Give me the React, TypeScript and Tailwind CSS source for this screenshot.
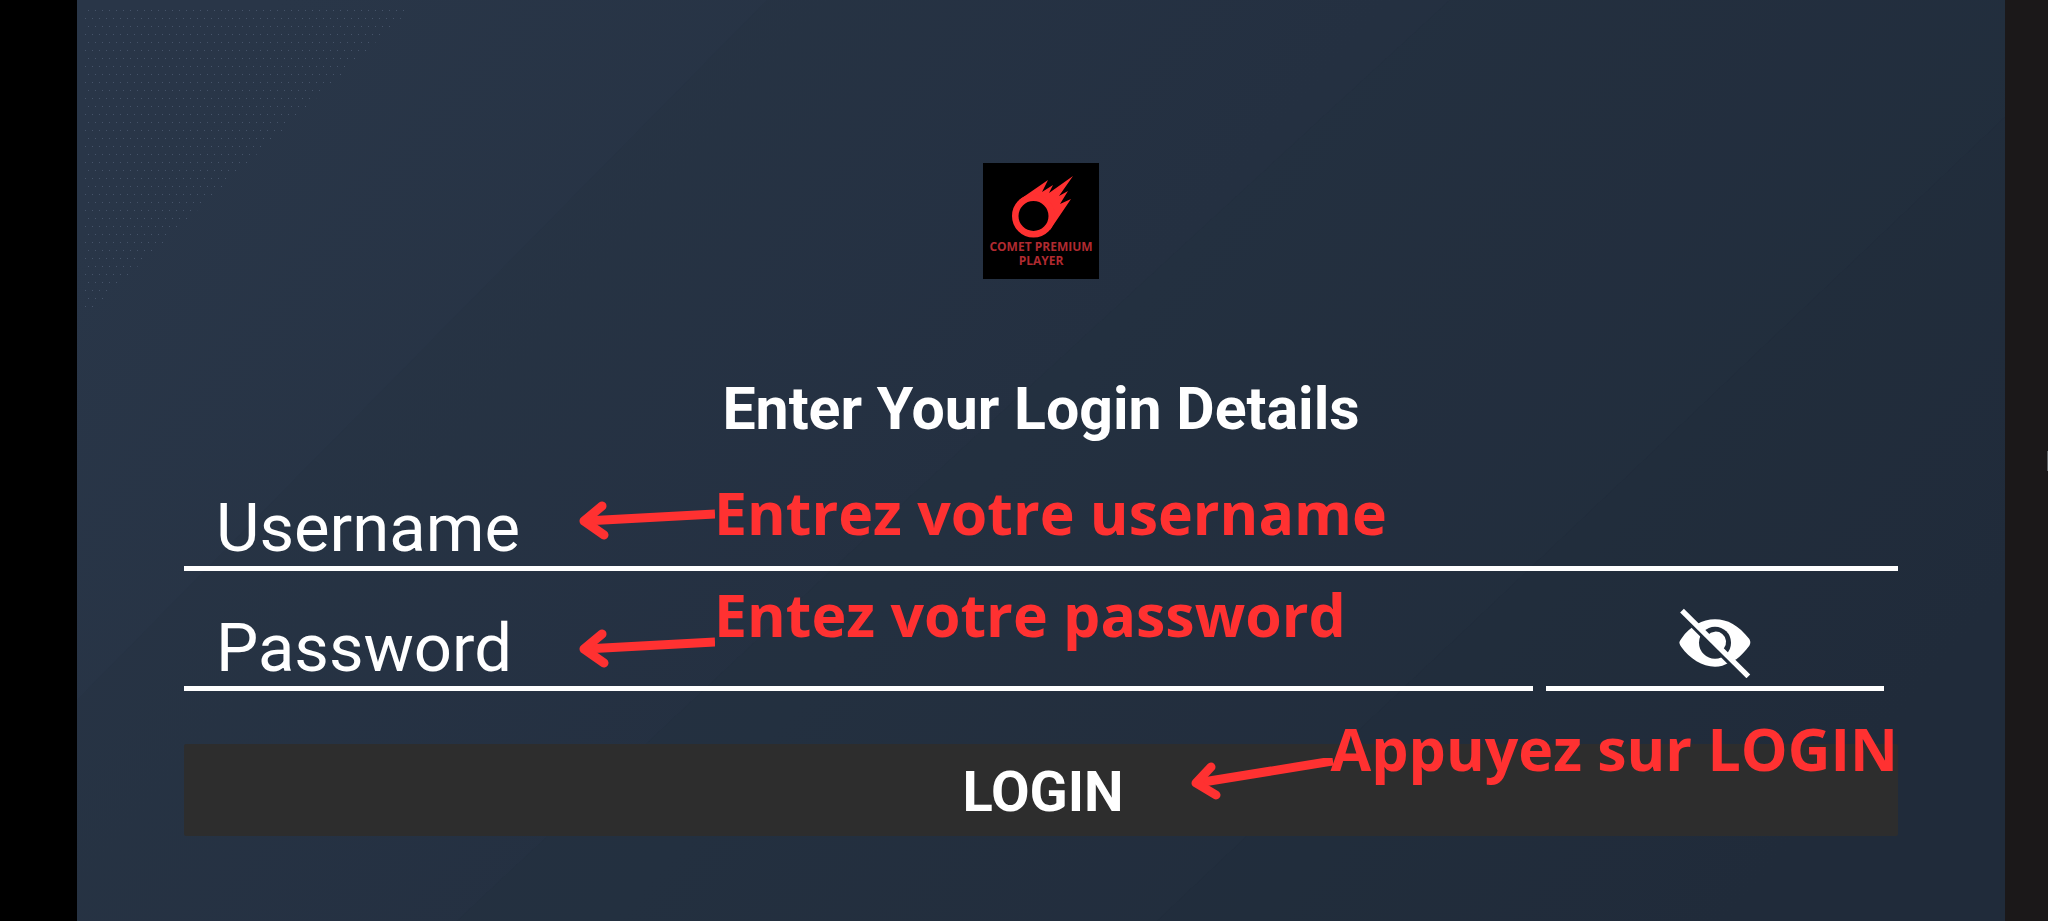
import { useState } from 'react'

function Backdrop() {
  return (
    <svg aria-hidden="true" className="absolute inset-0 h-full w-full" viewBox="0 0 1928 921" preserveAspectRatio="xMinYMin slice">
      <defs>
        <linearGradient id="base" gradientUnits="userSpaceOnUse" x1="200" y1="0" x2="1500" y2="1100">
          <stop offset="0" stopColor="#293648" />
          <stop offset="0.5" stopColor="#253142" />
          <stop offset="1" stopColor="#212c3b" />
        </linearGradient>
        <pattern id="dots" width="14" height="16" patternUnits="userSpaceOnUse">
          <path d="M1 2h1v1h-1zM8 2h1v1h-1zM4 10h1v1h-1zM11 10h1v1h-1z" fill="#46546a" />
        </pattern>
      </defs>
      <rect width="1928" height="921" fill="url(#base)" />
      <path d="M690 0H1373L837 493L380 921H0V700Z" fill="#243041" fillOpacity="0.25" />
      <path d="M1373 0H1928V117L1464 558L1080 921H380L837 493Z" fill="#222d3d" fillOpacity="0.3" />
      <path d="M1928 117V921H1080L1464 558Z" fill="#1f2a38" fillOpacity="0.35" />
      <path d="M6 8H335L6 318Z" fill="url(#dots)" />
    </svg>
  )
}

function Logo() {
  return (
    <svg role="img" aria-label="Comet Premium Player" className="size-29" viewBox="0 0 116 116">
      <rect width="116" height="116" fill="#000" />
      <path d="M90 13L76 33L85 28L77 41L88 36L67 67L50 53L36 37L65 17L59 29L70 22L66 30Z" fill="#ff3131" />
      <circle cx="50.500" cy="53" r="18.250" fill="#000" stroke="#ff3131" strokeWidth="6.500" />
      <text x="58" y="88" textAnchor="middle" className="fill-[#b02a30] font-['Open_Sans',sans-serif] text-[12px] font-bold">COMET PREMIUM</text>
      <text x="58" y="102" textAnchor="middle" className="fill-[#b02a30] font-['Open_Sans',sans-serif] text-[12px] font-bold">PLAYER</text>
    </svg>
  )
}

function EyeOff() {
  return (
    <svg aria-hidden="true" className="h-[70px] w-[72px]" viewBox="0 0 216 210">
      <mask id="eye-cut" maskUnits="userSpaceOnUse" x="0" y="0" width="216" height="210">
        <rect width="216" height="210" fill="#fff" />
        <circle cx="108" cy="104" r="48" fill="#000" />
        <path d="M86 82A28 28 0 0 1 134 122L128 124Z" fill="#fff" />
        <path d="M-10 -12L220 218L198 220L-32 -10Z" fill="#000" />
      </mask>
      <path
        d="M1 104Q2 98 7 92C34 54 70 34 108 34C146 34 178 52 211 93Q217 103 211 113C198 130 186 142 172 154L150 164C137 171 124 176 108 176C70 176 32 152 7 117Q2 110 1 104Z"
        fill="#fff"
        mask="url(#eye-cut)"
      />
      <path d="M9 8L208 205" stroke="#fff" strokeWidth="16" />
    </svg>
  )
}

function FlatArrow() {
  return (
    <svg aria-hidden="true" className="h-11 w-[136px] shrink-0" viewBox="0 0 136 44" fill="none" stroke="#ff3131" strokeWidth="9">
      <path d="M6 22L136 15" />
      <path d="M23 7L5 22L25 36" strokeLinecap="round" strokeLinejoin="round" />
    </svg>
  )
}

function SteepArrow() {
  return (
    <svg aria-hidden="true" className="h-11 w-[142px] shrink-0" viewBox="0 0 142 44" fill="none" stroke="#ff3131" strokeWidth="9">
      <path d="M6 25L142 3" />
      <path d="M20 9L5 25L25 37" strokeLinecap="round" strokeLinejoin="round" />
    </svg>
  )
}

const note = "pointer-events-none absolute whitespace-nowrap font-['Open_Sans',sans-serif] text-[59px] leading-[80px] font-bold text-[#ff3131]"
const field = 'h-[120px] w-full min-w-0 border-b-5 border-white bg-transparent pt-[38px] pl-8 text-[67px] leading-[74px] text-white outline-none placeholder:text-white placeholder:opacity-100'

export default function App() {
  const [visible, setVisible] = useState(false)
  return (
    <div className="flex min-h-screen bg-black pl-[77px] font-[Roboto,sans-serif]">
      <main className="relative flex-1 px-[107px]">
        <Backdrop />
        <form className="relative flex flex-col items-center pt-[163px]" onSubmit={(e) => e.preventDefault()}>
          <Logo />
          <h1 className="mt-[90px] text-[59px] leading-[80px] font-bold text-white">Enter Your Login Details</h1>
          <div className="relative mt-0.5 w-full">
            <input aria-label="Username" placeholder="Username" className={field} />
            <p className={`${note} top-[21px] left-[530px]`}>Entrez votre username</p>
            <div className="pointer-events-none absolute top-12 left-[395px]"><FlatArrow /></div>
          </div>
          <div className="relative flex w-full gap-[13px] pr-[14px]">
            <input aria-label="Password" type={visible ? 'text' : 'password'} placeholder="Password" className={field} />
            <button
              type="button"
              aria-label="Show password"
              onClick={() => setVisible(!visible)}
              className="flex h-[120px] w-[338px] shrink-0 items-end justify-center border-b-5 border-white pb-2"
            >
              <EyeOff />
            </button>
            <p className={`${note} top-[3px] left-[530px]`}>Entez votre password</p>
            <div className="pointer-events-none absolute top-14 left-[395px]"><FlatArrow /></div>
          </div>
          <div className="relative mt-[53px] w-full">
            <button type="submit" className="h-[92px] w-full rounded-xs bg-[#2d2d2d] pt-1 pl-1 text-[56px] leading-[80px] font-bold text-white">LOGIN</button>
            <div className="pointer-events-none absolute top-[14px] right-[565px]"><SteepArrow /></div>
            <p className={`${note} -top-9 right-0`}>Appuyez sur LOGIN</p>
          </div>
        </form>
      </main>
      <aside className="flex w-[43px] items-center justify-end bg-[#1b1819]">
        <span className="h-5 w-px bg-[#5c5f62]" />
      </aside>
    </div>
  )
}
